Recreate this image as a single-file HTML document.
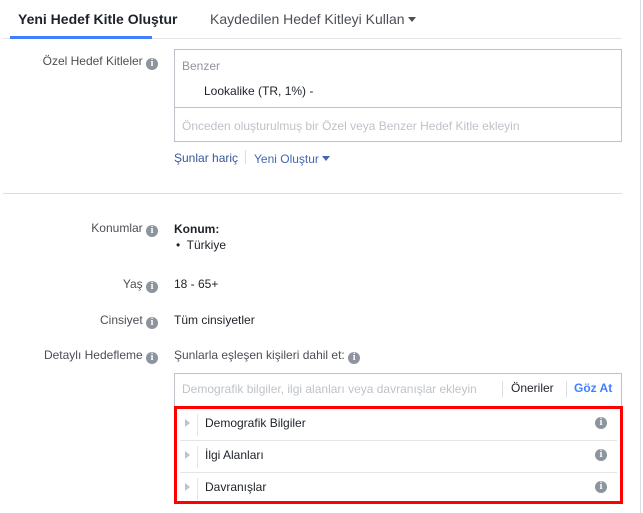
<!DOCTYPE html>
<html><head><meta charset="utf-8"><style>
*{margin:0;padding:0;box-sizing:border-box}
body{width:643px;height:513px;background:#fff;font-family:"Liberation Sans",Arial,sans-serif;font-size:12px;color:#1d2129;position:relative;overflow:hidden}
.a{position:absolute;white-space:nowrap}
.i{display:inline-block;width:12px;height:12px;border-radius:50%;background:#8d949e;color:#fff;font-size:10px;font-weight:bold;text-align:center;line-height:12px;vertical-align:-1px;font-family:"Liberation Serif",serif}
.lbl{color:#4b4f56;right:485px}
.tri{display:inline-block;width:0;height:0;border-left:4px solid transparent;border-right:4px solid transparent;border-top:5px solid currentColor;vertical-align:2px}
.row{position:absolute;left:3px;right:3px;height:32px;border-bottom:1px solid #e5e5e5}
.row .ar{position:absolute;left:5px;top:10px;width:0;height:0;border-top:4px solid transparent;border-bottom:4px solid transparent;border-left:5px solid #bec2c9}
.row .sp{position:absolute;left:17px;top:5px;height:22px;border-left:1px solid #e5e5e5}
.row .t{position:absolute;left:25px;top:7px;font-size:12px;color:#1d2129}
.row .i{position:absolute;right:10px;top:8px}
</style></head><body>
<div style="position:absolute;right:2px;top:0;height:513px;border-left:1px solid #dadde1"></div>
<div class="a" style="left:18px;top:11px;font-size:14px;font-weight:bold;color:#1d2129">Yeni Hedef Kitle Oluştur</div>
<div class="a" style="left:210px;top:11px;font-size:14px;color:#4b4f56">Kaydedilen Hedef Kitleyi Kullan <span class="tri"></span></div>
<div style="position:absolute;left:3px;top:38px;width:619px;border-top:1px solid #e5e5e5"></div>
<div style="position:absolute;left:10px;top:36px;width:142px;height:3px;background:#4080ff"></div>

<div class="a lbl" style="top:54px">Özel Hedef Kitleler <span class="i">i</span></div>
<div style="position:absolute;left:174px;top:49px;width:448px;height:93px;border:1px solid #bec3c9"></div>
<div style="position:absolute;left:174px;top:107px;width:448px;border-top:1px solid #bec3c9"></div>
<div class="a" style="left:182px;top:59px;color:#90949c">Benzer</div>
<div class="a" style="left:204px;top:84px;color:#1d2129">Lookalike (TR, 1%) -</div>
<div class="a" style="left:182px;top:119px;color:#bec3c9">Önceden oluşturulmuş bir Özel veya Benzer Hedef Kitle ekleyin</div>
<div class="a" style="left:174px;top:151px;color:#365899">Şunlar hariç</div>
<div style="position:absolute;left:245px;top:150px;height:14px;border-left:1px solid #dadde1"></div>
<div class="a" style="left:254px;top:152px;color:#4267b2">Yeni Oluştur <span class="tri"></span></div>
<div style="position:absolute;left:3px;top:193px;width:619px;border-top:1px solid #dadde1"></div>

<div class="a lbl" style="top:221px">Konumlar <span class="i">i</span></div>
<div class="a" style="left:174px;top:222px;font-weight:bold">Konum:</div>
<div class="a" style="left:176px;top:238px">•&nbsp; Türkiye</div>
<div class="a lbl" style="top:277px">Yaş <span class="i">i</span></div>
<div class="a" style="left:174px;top:277px">18 - 65+</div>
<div class="a lbl" style="top:313px">Cinsiyet <span class="i">i</span></div>
<div class="a" style="left:174px;top:313px">Tüm cinsiyetler</div>
<div class="a lbl" style="top:348px">Detaylı Hedefleme <span class="i">i</span></div>
<div class="a" style="left:174px;top:348px;color:#4b4f56">Şunlarla eşleşen kişileri dahil et: <span class="i">i</span></div>

<div style="position:absolute;left:174px;top:373px;width:448px;height:34px;border:1px solid #bec3c9"></div>
<div class="a" style="left:182px;top:382px;color:#bec3c9">Demografik bilgiler, ilgi alanları veya davranışlar ekleyin</div>
<div style="position:absolute;left:502px;top:381px;height:16px;border-left:1px solid #dadde1"></div>
<div class="a" style="left:511px;top:381px;color:#1d2129">Öneriler</div>
<div style="position:absolute;left:566px;top:381px;height:16px;border-left:1px solid #dadde1"></div>
<div class="a" style="left:574px;top:381px;color:#4080ff;font-weight:bold">Göz At</div>

<div style="position:absolute;left:174px;top:406px;width:449px;height:98px;border:3px solid #f00;background:#fff">
 <div class="row" style="top:0"><span class="ar"></span><span class="sp"></span><span class="t">Demografik Bilgiler</span><span class="i">i</span></div>
 <div class="row" style="top:32px"><span class="ar"></span><span class="sp"></span><span class="t">İlgi Alanları</span><span class="i">i</span></div>
 <div class="row" style="top:64px;border-bottom:none"><span class="ar"></span><span class="sp"></span><span class="t">Davranışlar</span><span class="i">i</span></div>
</div>
</body></html>
